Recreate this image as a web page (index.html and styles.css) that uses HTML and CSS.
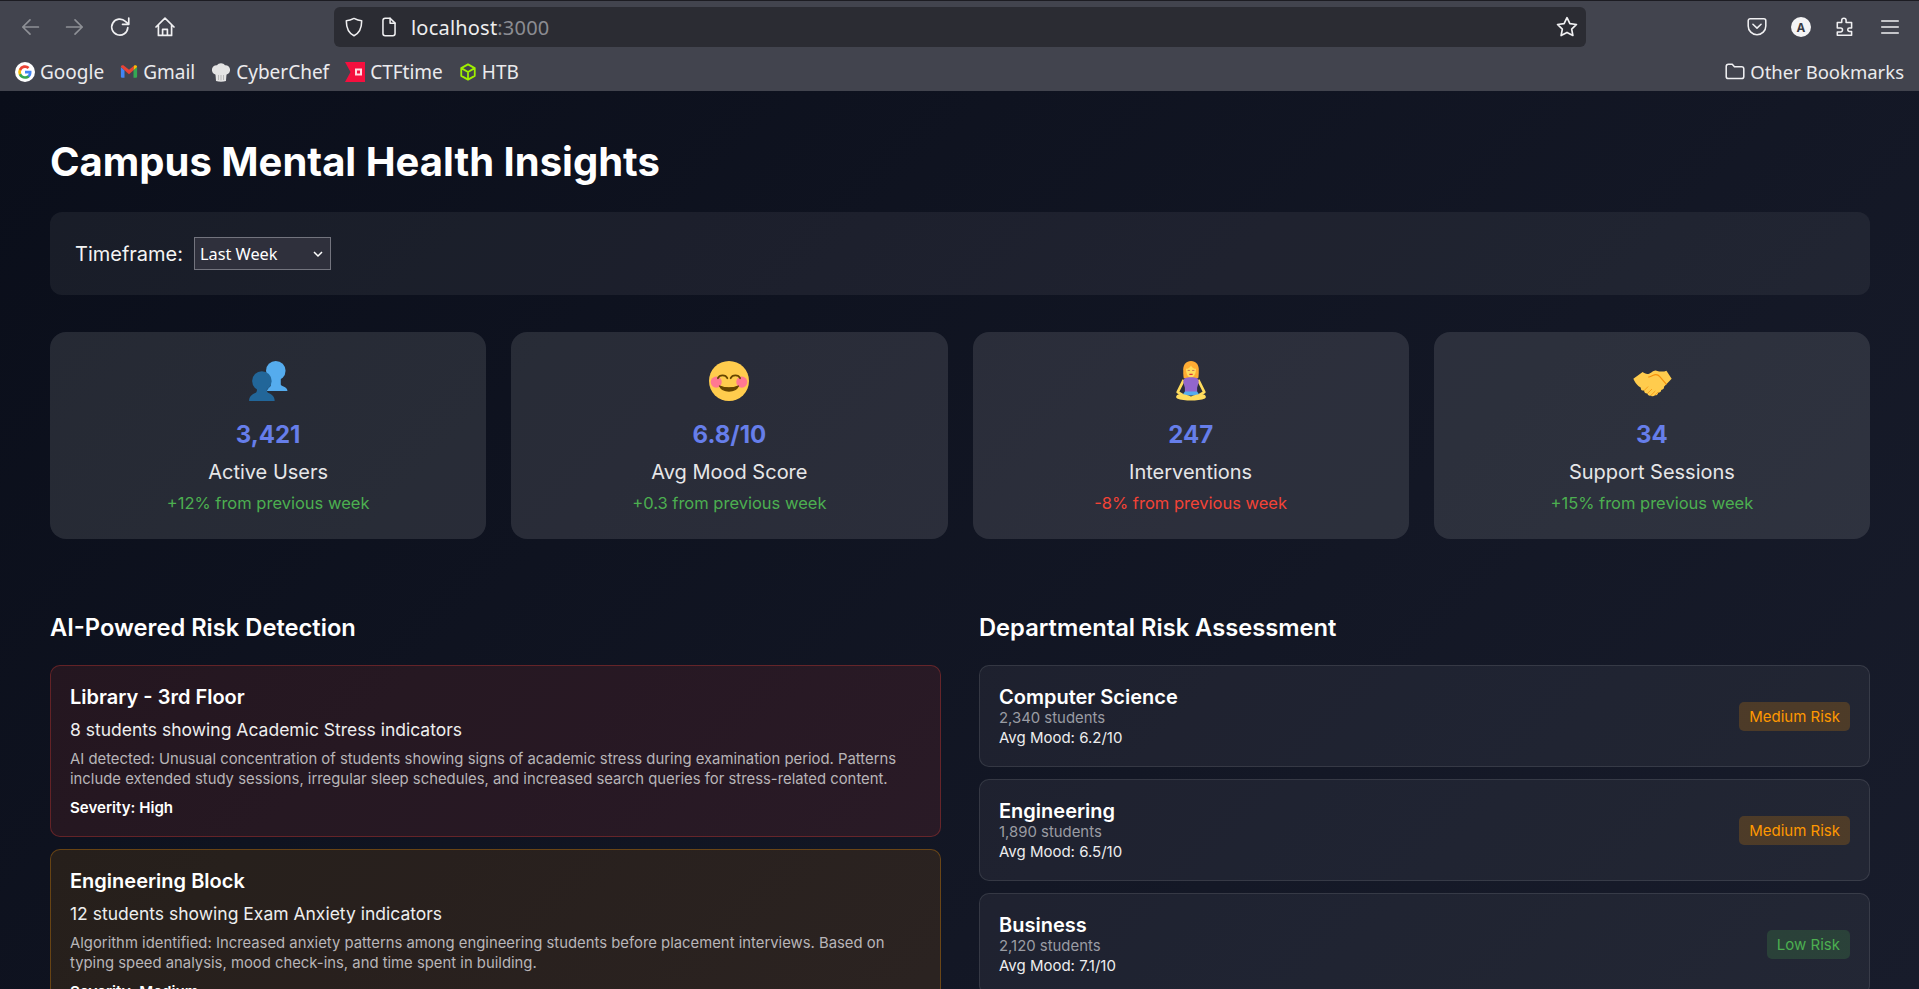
FILE: index.html
```html
<!DOCTYPE html>
<html lang="en">
<head>
<meta charset="utf-8">
<title>Campus Mental Health Insights</title>
<link rel="stylesheet" href="styles.css">
</head>
<body>
<div class="app">
  <header class="browser">
    <div class="toolbar">
      <div class="nav">
        <svg class="ico dim" viewBox="0 0 20 20"><path d="M17 10H4M10 4l-6 6 6 6"/></svg>
        <svg class="ico dim" viewBox="0 0 20 20"><path d="M3 10h13M10 4l6 6-6 6"/></svg>
        <svg class="ico" viewBox="0 0 20 20"><path d="M16.500 10.500a6.700 6.700 0 1 1-2-5.200L17 7.500"/><path d="M17.300 2.500v5.300h-5.200"/></svg>
        <svg class="ico" viewBox="0 0 20 20"><path d="M2.500 10 10 2.600l7.500 7.400M4.500 8.500V17h11V8.500M8 17v-5h4v5"/></svg>
      </div>
      <div class="urlbar">
        <svg class="ico small" viewBox="0 0 20 20"><path d="M10 2.200c2.600 1.400 4.800 2 7 2.100 0 6-1.400 11-7 13.600C4.400 15.300 3 10.300 3 4.300c2.200-.1 4.400-.7 7-2.100z"/></svg>
        <svg class="ico small" viewBox="0 0 20 20"><path d="M4.500 4a2 2 0 0 1 2-2H11l4.500 4.500V16a2 2 0 0 1-2 2h-7a2 2 0 0 1-2-2z"/><path d="M11 2v4.500h4.500"/></svg>
        <span class="url">localhost<span class="port">:3000</span></span>
        <svg class="ico star" viewBox="0 0 20 20"><path d="m10 2.200 2.400 5 5.500.7-4 3.800 1 5.400-4.900-2.600-4.900 2.600 1-5.400-4-3.800 5.500-.7z"/></svg>
      </div>
      <div class="tools">
        <svg class="ico small" viewBox="0 0 20 20"><path d="M3.800 2.500h12.400A1.800 1.800 0 0 1 18 4.300V9a8 8 0 0 1-16 0V4.300a1.800 1.800 0 0 1 1.800-1.800zM6.300 7.500 10 11l3.700-3.500"/></svg>
        <span class="avatar">A</span>
        <svg class="ico small" viewBox="0 0 20 20"><path d="M3 6h4V4a2 2 0 1 1 4 0v2h5v5h-2a1.500 1.500 0 0 0 0 3h2v3.500H3v-3h3a1.700 1.700 0 0 0 0-3.500H3z"/></svg>
        <svg class="ico small" viewBox="0 0 20 20"><path d="M2.500 4.500h15M2.500 10h15M2.500 15.500h15"/></svg>
      </div>
    </div>
    <div class="bookmarks">
      <span class="bm">
        <svg class="fav" viewBox="0 0 20 20"><circle cx="10" cy="10" r="10" fill="#fff"/><path d="M16.500 10.200c0-.5 0-1-.1-1.400H10v2.700h3.700a3.200 3.200 0 0 1-1.400 2v1.800h2.200c1.300-1.200 2-3 2-5.100z" fill="#4285f4"/><path d="M10 16.800c1.800 0 3.400-.6 4.500-1.600l-2.200-1.700c-.6.400-1.400.7-2.300.7-1.800 0-3.300-1.200-3.800-2.800H3.900V13A6.800 6.800 0 0 0 10 16.800z" fill="#34a853"/><path d="M6.200 11.400a4 4 0 0 1 0-2.700V7H3.900a6.800 6.800 0 0 0 0 6.100z" fill="#fbbc05"/><path d="M10 5.900c1 0 1.900.3 2.600 1l1.900-2A6.800 6.800 0 0 0 3.900 7l2.300 1.800C6.700 7.100 8.200 5.900 10 5.900z" fill="#ea4335"/></svg>
        Google</span>
      <span class="bm">
        <svg class="fav narrow" viewBox="0 0 20 20"><path d="M1 4.500v10.800c0 .6.500 1 1 1h3V8z" fill="#4285f4"/><path d="M19 4.500v10.800c0 .6-.5 1-1 1h-3V8z" fill="#34a853"/><path d="M1 4.500C1 2.500 3 2 4.500 3L10 7.500 15.500 3 15 8l-5 4.500L5 8z" fill="#ea4335"/><path d="M15.500 3C17 2 19 2.500 19 4.500L15 8z" fill="#fbbc05"/></svg>
        Gmail</span>
      <span class="bm">
        <svg class="fav" viewBox="0 0 20 20"><path d="M5 19c-.2-2.500-.3-5-.6-6.500C2 12 .5 9.500 1 7c.5-2.800 2.500-4 5-3.800C7.500.5 12.500.5 14 3.200c2.500-.2 4.500 1 5 3.800.5 2.500-1 5-3.400 5.500-.3 1.500-.4 4-.6 6.500-3 1-7 1-10 0z" fill="#e4e4e4"/><path d="M7.500 13v5M10 13v5.500M12.500 13v5" stroke="#b8b8b8" fill="none"/></svg>
        CyberChef</span>
      <span class="bm">
        <svg class="fav" viewBox="0 0 20 20"><path d="M0 0h20v20H0l5.500-10z" fill="#f50f3e"/><rect x="10" y="6.500" width="7" height="7" fill="#ffd9df"/><rect x="12" y="8.500" width="3" height="3" fill="#f50f3e"/></svg>
        CTFtime</span>
      <span class="bm">
        <svg class="fav narrow" viewBox="0 0 20 20"><path d="M10 1.500l7.500 4.200v8.600L10 18.500l-7.500-4.200V5.700zM2.500 5.700 10 10l7.500-4.300M10 10v8.500" fill="none" stroke="#9fef00" stroke-width="2" stroke-linejoin="round"/></svg>
        HTB</span>
      <span class="bm other">
        <svg class="ico small" viewBox="0 0 20 20"><path d="M2 5a2 2 0 0 1 2-2h3.500l2 2.200H16a2 2 0 0 1 2 2V14a2 2 0 0 1-2 2H4a2 2 0 0 1-2-2z"/></svg>
        Other Bookmarks</span>
    </div>
  </header>

  <main class="page">
    <h1 class="title">Campus Mental Health Insights</h1>

    <section class="filters">
      <label class="filter-label" for="timeframe">Timeframe:</label>
      <select class="filter-select" id="timeframe">
        <option>Last Week</option>
        <option>Last Month</option>
        <option>Last Semester</option>
      </select>
    </section>

    <section class="stats">
      <article class="stat">
        <svg class="emoji" viewBox="0 0 36 36">
          <circle cx="25" cy="8.800" r="8.800" fill="#55acee"/>
          <path d="M20.500 14h9v7c0 1 1 1.500 2.500 2 2 .7 3.500 2 3.500 4H17c.5-2 2-3.300 3-4 .5-.5.5-1 .5-2z" fill="#55acee"/>
          <circle cx="12.500" cy="18" r="8.800" fill="#269"/>
          <path d="M8 23h9v3.500c0 1.500 1 2.200 2.500 2.800C22 30.500 24 32.500 24 36H1c0-3.500 2-5.500 4.500-6.700C7 28.700 8 28 8 26.500z" fill="#269"/>
        </svg>
        <div class="stat-value">3,421</div>
        <div class="stat-label">Active Users</div>
        <div class="stat-change up">+12% from previous week</div>
      </article>
      <article class="stat">
        <svg class="emoji" viewBox="0 0 36 36">
          <circle cx="18" cy="18" r="18" fill="#ffcc4d"/>
          <circle cx="6.500" cy="19" r="5" fill="#ff7892"/>
          <circle cx="29.500" cy="19" r="5" fill="#ff7892"/>
          <path d="M8 15.500c1.500-3.500 7-3.500 8.500 0M19.500 15.500c1.500-3.500 7-3.500 8.500 0" fill="none" stroke="#664500" stroke-width="1.600" stroke-linecap="round"/>
          <path d="M9.500 22.500c3 6 14 6 17 0-5 2-12 2-17 0z" fill="#664500" stroke="#664500" stroke-width="1.200" stroke-linejoin="round"/>
        </svg>
        <div class="stat-value">6.8/10</div>
        <div class="stat-label">Avg Mood Score</div>
        <div class="stat-change up">+0.3 from previous week</div>
      </article>
      <article class="stat">
        <svg class="emoji" viewBox="0 0 36 36">
          <path d="M18 0c-4.500 0-7 3.500-7 7.500 0 3 0 6 .5 8h13c.5-2 .5-5 .5-8C25 3.500 22.500 0 18 0z" fill="#ffac33"/>
          <path d="M13.500 7c2 0 3.500-1 4.500-3 1 2 2.500 3 4.500 3 0 4-1.500 8-4.500 8s-4.500-4-4.500-8z" fill="#ffdc5d"/>
          <path d="M15 8.500h2M19 8.500h2" stroke="#c1694f" stroke-width=".8"/>
          <path d="M16.500 12h3" stroke="#df1f32" stroke-width="1"/>
          <path d="M11.500 17 6 28l5 3M24.500 17 30 28l-5 3" fill="none" stroke="#ffdc5d" stroke-width="2.400" stroke-linejoin="round"/>
          <path d="M12.500 15.500c3-1.200 8-1.200 11 0 .8.500 1.500 2 1.500 3.500l-1.500 5v4h-11v-4L11 19c0-1.500.7-3 1.500-3.500z" fill="#9266cc"/>
          <path d="M12.500 27.500h11l2.500 3.500H10z" fill="#55acee"/>
          <path d="M5.500 30.500c3-1.500 8-.5 12.500 1.500 4.500-2 9.500-3 12.500-1.500 1.200 1 1.200 2.500 0 3.200-3 1.300-8 1.800-12.500 1.800s-9.500-.5-12.500-1.800c-1.200-.7-1.200-2.200 0-3.200z" fill="#ffdc5d"/>
        </svg>
        <div class="stat-value">247</div>
        <div class="stat-label">Interventions</div>
        <div class="stat-change down">-8% from previous week</div>
      </article>
      <article class="stat">
        <svg class="emoji" viewBox="0 0 36 36">
          <path d="M9.600 10 1.200 16C2.500 19 4 21 5.700 22.500L8 24c-.5 2 1.500 3 3 2.500-.3 2 1.500 3 3 2.700 0 1.500 1.500 2.500 3 1.800 1 1.200 2.700.8 3.700-.2 1.500.3 2.800-.8 2.800-2.300 1.500 0 2.800-1 2.800-2.500 1.500 0 2.800-1.300 2.500-2.800L35.700 16 31 8.700c-3 1.300-6 .8-9 0-3-.7-5 2.800-7.300 3-2.200.3-3.700-.7-5.100-1.700z" fill="#ffcc4d"/>
          <path d="M14.700 14.500c2-.3 3.500-1.500 5.500-2 2-.5 3.500 0 4.800 1.500L31 21" fill="none" stroke="#f4900c" stroke-width="1.100"/>
          <path d="M11 26.500l3.500-3.500M14 29.200l4-4M17 31l4-4M20.700 30.800l3-3" stroke="#f4900c" stroke-width=".7" fill="none"/>
        </svg>
        <div class="stat-value">34</div>
        <div class="stat-label">Support Sessions</div>
        <div class="stat-change up">+15% from previous week</div>
      </article>
    </section>

    <section class="columns">
      <div class="col">
        <h2 class="section-title">AI-Powered Risk Detection</h2>
        <article class="alert high">
          <h3 class="alert-place">Library - 3rd Floor</h3>
          <p class="alert-count">8 students showing Academic Stress indicators</p>
          <p class="alert-desc">AI detected: Unusual concentration of students showing signs of academic stress during examination period. Patterns include extended study sessions, irregular sleep schedules, and increased search queries for stress-related content.</p>
          <p class="alert-sev">Severity: High</p>
        </article>
        <article class="alert medium">
          <h3 class="alert-place">Engineering Block</h3>
          <p class="alert-count">12 students showing Exam Anxiety indicators</p>
          <p class="alert-desc">Algorithm identified: Increased anxiety patterns among engineering students before placement interviews. Based on typing speed analysis, mood check-ins, and time spent in building.</p>
          <p class="alert-sev">Severity: Medium</p>
        </article>
      </div>
      <div class="col">
        <h2 class="section-title">Departmental Risk Assessment</h2>
        <article class="dept">
          <div>
            <h3 class="dept-name">Computer Science</h3>
            <div class="dept-students">2,340 students</div>
            <div class="dept-mood">Avg Mood: 6.2/10</div>
          </div>
          <span class="risk medium">Medium Risk</span>
        </article>
        <article class="dept">
          <div>
            <h3 class="dept-name">Engineering</h3>
            <div class="dept-students">1,890 students</div>
            <div class="dept-mood">Avg Mood: 6.5/10</div>
          </div>
          <span class="risk medium">Medium Risk</span>
        </article>
        <article class="dept">
          <div>
            <h3 class="dept-name">Business</h3>
            <div class="dept-students">2,120 students</div>
            <div class="dept-mood">Avg Mood: 7.1/10</div>
          </div>
          <span class="risk low">Low Risk</span>
        </article>
      </div>
    </section>
  </main>
</div>
</body>
</html>
```
FILE: styles.css
```css
* { box-sizing: border-box; }
html, body { margin: 0; height: 100%; }
body { font-family: Inter, "Liberation Sans", sans-serif; color: #fff; background: #0a0e1a; overflow: hidden; }
.app { height: 100vh; display: flex; flex-direction: column; overflow: hidden; }

.browser { flex: none; height: 91px; background: #42444e; border-top: 1px solid #1c1c22; font-family: "Noto Sans", sans-serif; color: #e6e6e8; }
.toolbar { height: 50px; display: flex; align-items: center; padding-top: 2px; }
.nav { width: 334px; display: flex; align-items: center; padding-left: 18px; gap: 21px; }
.ico { width: 24px; height: 24px; fill: none; stroke: #f0f0f2; stroke-width: 1.4; stroke-linejoin: round; stroke-linecap: round; flex: none; }
.ico.dim { stroke: #8e9096; }
.ico.small { width: 22px; height: 22px; }
.urlbar { width: 1252px; height: 40px; background: #2b2c33; border-radius: 6px; display: flex; align-items: center; padding: 0 7px 0 9px; gap: 13px; }
.url { font-size: 20px; color: #eeeeef; flex: 1; letter-spacing: .2px; margin-left: -2px; }
.port { color: #8b8c92; }
.star { width: 24px; height: 24px; }
.tools { flex: 1; display: flex; align-items: center; justify-content: flex-end; gap: 23px; padding-right: 18px; }
.avatar { width: 20px; height: 20px; border-radius: 50%; background: #f4f4f5; color: #3a3b44; font: 700 12px "Noto Sans", sans-serif; display: flex; align-items: center; justify-content: center; }
.bookmarks { height: 40px; display: flex; align-items: center; padding: 1px 0 0 15px; gap: 16px; font-size: 19px; color: #ebebed; }
.bm { display: flex; align-items: center; gap: 5px; }
.bm.other { margin-left: auto; padding-right: 15px; gap: 4px; font-size: 18.5px; }
.fav { width: 20px; height: 20px; flex: none; }
.fav.narrow { width: 18px; height: 18px; }

.page { flex: 1; min-height: 0; overflow: hidden; padding: 41px 49px 0 50px; background: linear-gradient(135deg, #0a0e1a 0%, #181c2b 100%); }
.title { margin: 0 0 20px; font-size: 40px; line-height: 60px; font-weight: 700; }

.filters { height: 83px; display: flex; align-items: center; gap: 11px; padding: 0 25px; border-radius: 12px; background: rgba(255,255,255,.06); margin-bottom: 37px; }
.filter-label { font-size: 20px; color: #f4f4f4; }
.filter-select { appearance: none; width: 137px; height: 33px; background: #2f303c url("data:image/svg+xml,%3Csvg xmlns='http://www.w3.org/2000/svg' width='10' height='8'%3E%3Cpath d='M1 2l4 4 4-4' fill='none' stroke='%23fff' stroke-width='1.500'/%3E%3C/svg%3E") no-repeat right 7px center; color: #fff; border: 1px solid #73747e; border-radius: 0; font: 16.3px "Noto Sans", sans-serif; padding: 0 5px; }

.stats { display: grid; grid-template-columns: repeat(4, 1fr); gap: 25px; margin-bottom: 74px; }
.stat { height: 207px; border-radius: 16px; background: rgba(255,255,255,.11); display: flex; flex-direction: column; align-items: center; padding-top: 29px; }
.emoji { width: 40px; height: 40px; margin-bottom: 19px; }
.stat-value { font-size: 24px; line-height: 29px; font-weight: 700; color: #667eea; margin-bottom: 11px; }
.stat-label { font-size: 20px; line-height: 25px; color: #e6e6e8; margin-bottom: 8px; }
.stat-change { font-size: 16.5px; line-height: 20px; }
.up { color: #4caf50; }
.down { color: #f44336; }

.columns { display: grid; grid-template-columns: 1fr 1fr; gap: 38px; }
.section-title { margin: 0 0 23px; font-size: 23.7px; line-height: 29px; font-weight: 600; }

.alert { border: 1px solid; border-radius: 10px; padding: 19px; margin-bottom: 12px; }
.alert.high { background: rgba(244,67,54,.1); border-color: rgba(244,67,54,.3); }
.alert.medium { background: rgba(255,152,0,.1); border-color: rgba(255,152,0,.3); }
.alert-place { margin: 0 0 9px; font-size: 20px; line-height: 24px; font-weight: 600; }
.alert-count { margin: 0 0 8px; font-size: 17.5px; line-height: 24px; color: #eeeeee; }
.alert-desc { margin: 0 0 9px; font-size: 14.85px; line-height: 19.5px; color: #b8b5b8; }
.alert-sev { margin: 0; font-size: 15.1px; line-height: 19px; font-weight: 600; }

.dept { height: 102px; display: flex; align-items: center; justify-content: space-between; border: 1px solid rgba(255,255,255,.1); border-radius: 10px; padding: 0 19px; background: rgba(255,255,255,.05); margin-bottom: 12px; }
.dept-name { margin: 0; font-size: 20px; line-height: 23px; font-weight: 600; }
.dept-students { font-size: 14.9px; line-height: 19px; color: #9a9ca3; }
.dept-mood { font-size: 15px; line-height: 19px; color: #ededee; }
.risk { font-size: 15px; line-height: 17px; padding: 6px 10px; border-radius: 5px; }
.risk.medium { background: rgba(255,152,0,.2); color: #ff9800; }
.risk.low { background: rgba(76,175,80,.2); color: #4caf50; }
```
